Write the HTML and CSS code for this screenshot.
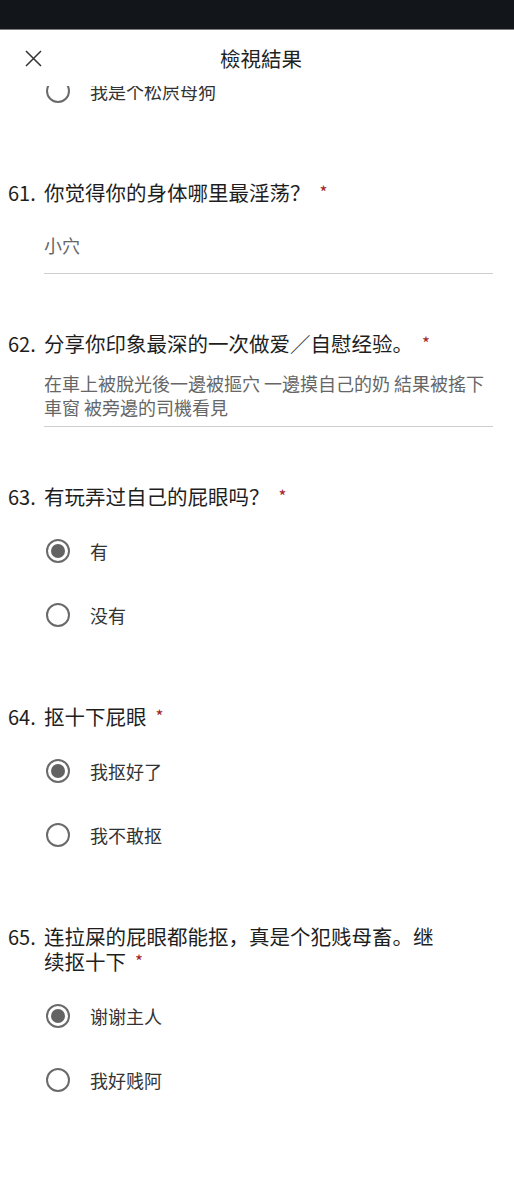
FILE: index.html
```html
<!DOCTYPE html>
<html lang="zh">
<head>
  <meta charset="UTF-8">
  <meta name="viewport" content="width=device-width, initial-scale=1.0">
  <title>檢視結果</title>
  <link rel="stylesheet" href="styles.css">
</head>
<body>
  <div class="statusbar"></div>
  <header class="topbar">
    <button class="close" aria-label="關閉">
      <svg width="17" height="17" viewBox="0 0 17 17"><path d="M1 1L16 16M16 1L1 16" stroke="#333" stroke-width="1.5" fill="none"/></svg>
    </button>
    <h1>檢視結果</h1>
    <span></span>
  </header>

  <main class="content">
    <div class="option partial">
      <span class="radio"></span>
      <span>我是个松屄母狗</span>
    </div>

    <section class="question">
      <div class="q-title"><span class="num">61.</span><span class="text">你觉得你的身体哪里最淫荡？<em>*</em></span></div>
      <div class="answer single">小穴</div>
    </section>

    <section class="question">
      <div class="q-title"><span class="num">62.</span><span class="text">分享你印象最深的一次做爱／自慰经验。<em>*</em></span></div>
      <div class="answer multi">在車上被脫光後一邊被摳穴 一邊摸自己的奶 結果被搖下車窗 被旁邊的司機看見</div>
    </section>

    <section class="question">
      <div class="q-title"><span class="num">63.</span><span class="text">有玩弄过自己的屁眼吗？<em>*</em></span></div>
      <div class="options">
        <div class="option"><span class="radio checked"></span><span>有</span></div>
        <div class="option"><span class="radio"></span><span>没有</span></div>
      </div>
    </section>

    <section class="question">
      <div class="q-title"><span class="num">64.</span><span class="text">抠十下屁眼<em>*</em></span></div>
      <div class="options">
        <div class="option"><span class="radio checked"></span><span>我抠好了</span></div>
        <div class="option"><span class="radio"></span><span>我不敢抠</span></div>
      </div>
    </section>

    <section class="question">
      <div class="q-title"><span class="num">65.</span><span class="text">连拉屎的屁眼都能抠，真是个犯贱母畜。继续抠十下<em>*</em></span></div>
      <div class="options">
        <div class="option"><span class="radio checked"></span><span>谢谢主人</span></div>
        <div class="option"><span class="radio"></span><span>我好贱阿</span></div>
      </div>
    </section>
  </main>
</body>
</html>
```

FILE: styles.css
```css
* {
  box-sizing: border-box;
}
body {
  margin: 0;
  background: #fff;
  color: #222;
  font-family: "Noto Sans CJK SC", "Noto Sans", sans-serif;
  height: 1200px;
  overflow: hidden;
}
.statusbar {
  height: 30px;
  background: #121519;
  border-bottom: 1px solid #7c7c7c;
}
.topbar {
  height: 56px;
  display: grid;
  grid-template-columns: 1fr auto 1fr;
  align-items: center;
  padding-left: 8px;
  background: #fff;
}
.close {
  justify-self: start;
  margin-left: 17px;
  padding: 0;
  border: 0;
  background: none;
  display: flex;
}
.topbar h1 {
  margin: 0;
  font-size: 20.5px;
  font-weight: normal;
  color: #222;
  line-height: 26px;
}
.content {
  height: 1114px;
  overflow: hidden;
  padding-left: 8px;
}
.question {
  padding-top: 57px;
}
.q-title {
  display: flex;
  font-size: 20.5px;
  line-height: 25px;
  color: #1e1e1e;
}
.q-title .num {
  width: 36px;
  flex: none;
  font-size: 20px;
}
.q-title .text {
  max-width: 405px;
}
.q-title em {
  display: inline-block;
  font-style: normal;
  color: #a4262c;
  font-size: 17px;
  line-height: 17px;
  margin-left: 9px;
  vertical-align: 2px;
}
.answer {
  margin: 15px 21px 0 36px;
  border-bottom: 1px solid #cfcfcf;
  font-size: 18px;
  line-height: 24px;
  color: #666;
}
.answer.single {
  padding: 13px 0 16px;
}
.answer.multi {
  padding: 0 0 7px;
}
.options {
  margin-top: 10px;
}
.option {
  height: 64px;
  display: flex;
  align-items: center;
  gap: 20px;
  padding-left: 38px;
  font-size: 18px;
  color: #333;
}
.option.partial {
  margin-top: -27px;
}
.radio {
  width: 24px;
  height: 24px;
  flex: none;
  border: 2px solid #6a6a6a;
  border-radius: 50%;
  display: flex;
  align-items: center;
  justify-content: center;
}
.radio.checked::after {
  content: "";
  width: 14px;
  height: 14px;
  border-radius: 50%;
  background: #636363;
}
```
